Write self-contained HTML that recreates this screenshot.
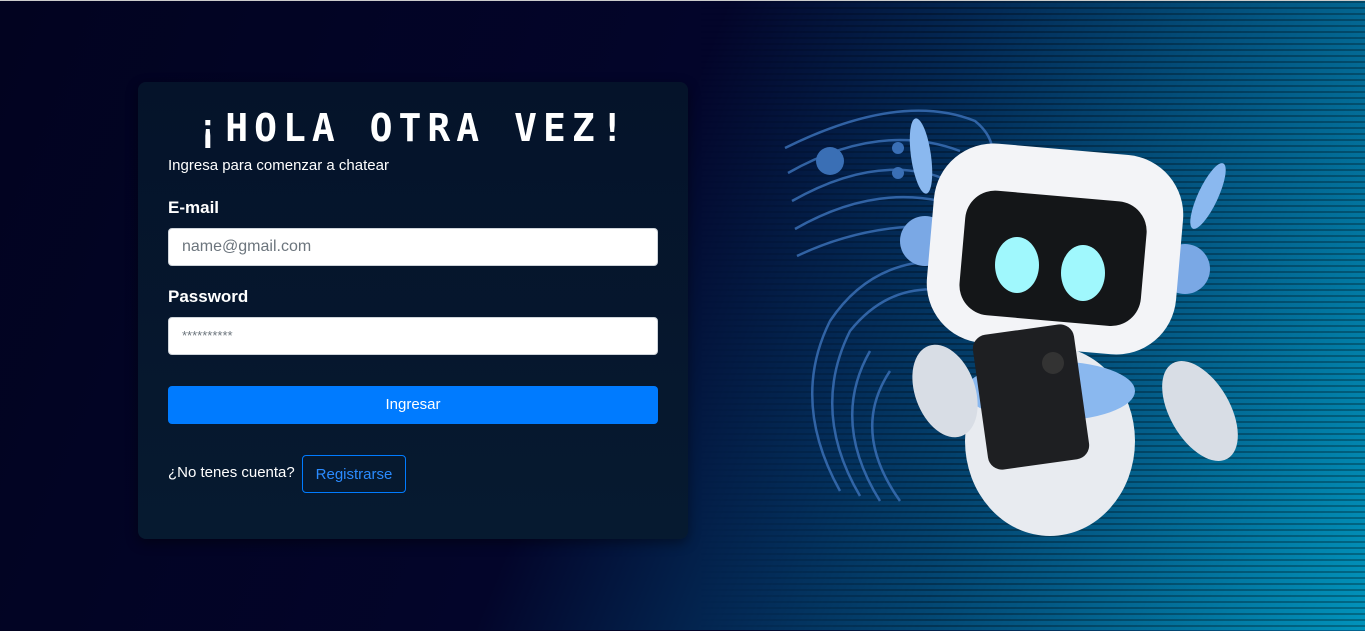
<!DOCTYPE html>
<html><head><meta charset="utf-8"><style>
*{margin:0;padding:0;box-sizing:border-box}
body{width:1365px;height:630px;overflow:hidden;font-family:"Liberation Sans",sans-serif;position:relative;
background:linear-gradient(112deg,#020320 0%,#03052a 45%,#032c58 62%,#035a86 80%,#0293bb 100%);border-top:1px solid #ccc}
.stripes{position:absolute;left:700px;top:0;width:665px;height:630px;
background:repeating-linear-gradient(180deg,rgba(0,0,0,0.28) 0 2px,transparent 2px 6px);
-webkit-mask:linear-gradient(90deg,transparent 0,#000 35%);mask:linear-gradient(90deg,transparent 0,#000 35%)}
.card{position:absolute;left:138px;top:81px;width:550px;height:457px;border-radius:8px;
background:linear-gradient(180deg,#05132a,#061a30);box-shadow:0 4px 12px rgba(0,0,0,.4)}
h1{position:absolute;left:0;width:550px;top:24px;text-align:center;color:#fff;font-family:"DejaVu Sans Mono","Liberation Mono",monospace;font-weight:bold;font-size:38px;letter-spacing:6px}
.t{position:absolute;left:30px;color:#fff}
.in{position:absolute;left:30px;width:490px;height:38px;background:#fff;border:1px solid #ced4da;border-radius:4px;padding-left:13px;line-height:36px;font-size:16px;color:#6c757d}
.btn{position:absolute;left:30px;top:304px;width:490px;height:38px;background:#007bff;border-radius:4px;color:#fff;text-align:center;line-height:38px;font-size:15px}
.reg{position:absolute;left:164px;top:373px;width:104px;height:38px;border:1px solid #007bff;border-radius:4px;color:#2a8bff;text-align:center;line-height:38px;font-size:15px}
</style></head><body>
<div class="stripes"></div>
<div class="card">
<h1>¡HOLA OTRA VEZ!</h1>
<div class="t" style="top:75px;font-size:15px">Ingresa para comenzar a chatear</div>
<div class="t" style="top:116px;font-size:17px;font-weight:bold">E-mail</div>
<div class="in" style="top:146px">name@gmail.com</div>
<div class="t" style="top:205px;font-size:17px;font-weight:bold">Password</div>
<div class="in" style="top:235px;font-size:13px">**********</div>
<div class="btn">Ingresar</div>
<div class="t" style="top:382px;font-size:15px">¿No tenes cuenta?</div>
<div class="reg">Registrarse</div>
</div>
<svg style="position:absolute;left:780px;top:90px" width="480" height="450" viewBox="780 90 480 450">
<g fill="none" stroke="#3a6fb5" stroke-width="2.5" opacity=".85">
<path d="M785 147 Q900 90 975 120 Q1000 140 990 170"/>
<path d="M788 172 Q880 120 960 150"/>
<path d="M792 200 Q880 150 950 180"/>
<path d="M795 228 Q870 185 940 200"/>
<path d="M797 255 Q860 225 930 225"/>
<path d="M840 490 Q790 400 830 320 Q870 260 940 260"/>
<path d="M860 495 Q810 410 850 330 Q890 280 950 290"/>
<path d="M880 500 Q830 420 870 350"/>
<path d="M900 500 Q850 430 890 370"/>
</g>
<circle cx="830" cy="160" r="14" fill="#3a6fb5"/><circle cx="898" cy="147" r="6" fill="#3a6fb5"/><circle cx="898" cy="172" r="6" fill="#3a6fb5"/>
<ellipse cx="921" cy="155" rx="10" ry="38" fill="#8ab8ef" transform="rotate(-8 921 155)"/>
<ellipse cx="1208" cy="195" rx="10" ry="36" fill="#8ab8ef" transform="rotate(25 1208 195)"/>
<ellipse cx="1050" cy="440" rx="85" ry="95" fill="#e8ebf0"/>
<ellipse cx="1050" cy="390" rx="85" ry="30" fill="#8ab8ef"/>
<ellipse cx="945" cy="390" rx="30" ry="48" fill="#d8dde5" transform="rotate(-20 945 390)"/>
<ellipse cx="1200" cy="410" rx="30" ry="55" fill="#d8dde5" transform="rotate(-30 1200 410)"/>
<circle cx="925" cy="240" r="25" fill="#7aa8e5"/><circle cx="1185" cy="268" r="25" fill="#7aa8e5"/>
<rect x="930" y="148" width="250" height="200" rx="60" fill="#f3f4f7" transform="rotate(5 1055 248)"/>
<rect x="962" y="195" width="182" height="125" rx="30" fill="#141618" transform="rotate(5 1055 258)"/>
<ellipse cx="1017" cy="264" rx="22" ry="28" fill="#a0f8fd"/><ellipse cx="1083" cy="272" rx="22" ry="28" fill="#a0f8fd"/>
<rect x="980" y="328" width="102" height="136" rx="14" fill="#1e1f22" transform="rotate(-8 1031 396)"/>
<circle cx="1053" cy="362" r="11" fill="#333"/>
</svg>
</body></html>
